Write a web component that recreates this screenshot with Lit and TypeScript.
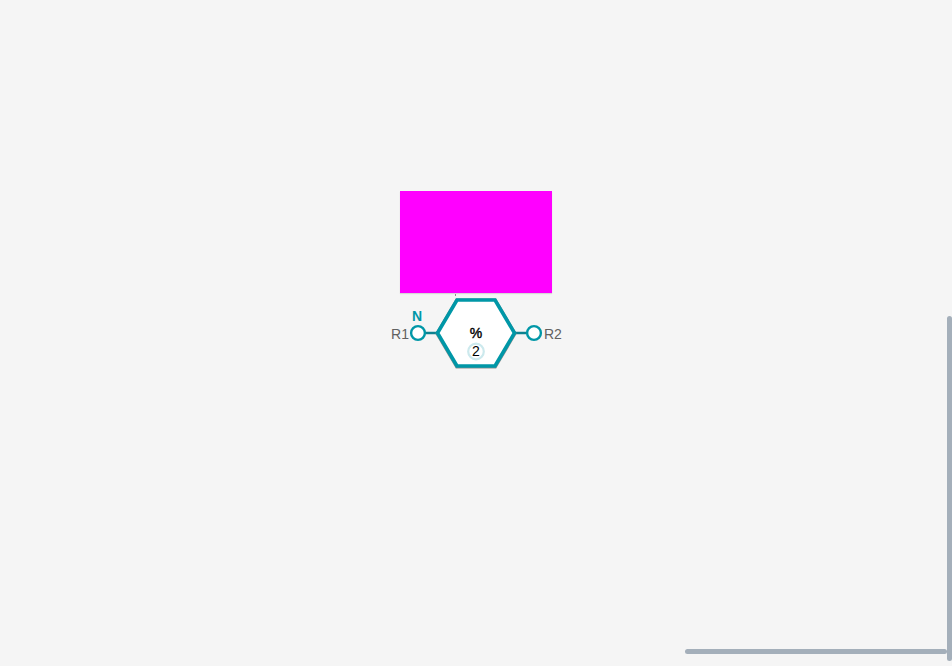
import { LitElement, html, css, svg } from "lit";
import { customElement } from "lit/decorators.js";

@customElement("operator-node")
export class OperatorNode extends LitElement {
  static styles = css`
    :host {
      display: block;
      position: relative;
      width: 180px;
      height: 80px;
    }
    .preview {
      position: absolute;
      left: 14px;
      bottom: 80px;
      width: 152px;
      height: 102px;
      background: #ff00ff;
      box-shadow: 0 1px 1px rgba(0, 0, 0, 0.12);
    }
    svg {
      display: block;
      width: 180px;
      height: 80px;
      overflow: visible;
    }
    .port,
    .badge,
    .body {
      fill: #ffffff;
    }
    .port,
    .body {
      stroke: #0097a7;
    }
    .shade {
      fill: none;
      stroke: #757575;
      opacity: 0.8;
    }
    .link {
      stroke: #0d8290;
    }
    .stem {
      stroke: #8f8f8f;
    }
    .badge {
      stroke: #cce9ed;
    }
    text {
      font-family: "Liberation Sans", Arial, sans-serif;
      font-size: 14px;
      fill: #616161;
    }
    .end {
      text-anchor: end;
    }
    .middle {
      text-anchor: middle;
      fill: #000000;
    }
    .kind {
      text-anchor: middle;
      font-weight: 700;
      fill: #0097a7;
    }
  `;

  render() {
    const hexagon = "51.5,40 71,7 109,7 128.5,40 109,73 71,73";
    return html`
      <div class="preview"></div>
      <svg viewBox="0 0 180 80" role="img" aria-label="Modulo 2, input R1, output R2">
        ${svg`
          <line class="stem" x1="69.5" y1="1" x2="69.5" y2="3" />
          <line class="link" stroke-width="2.5" x1="39" y1="40" x2="51" y2="40" />
          <line class="link" stroke-width="2.5" x1="129" y1="40" x2="141" y2="40" />
          <polygon class="shade" stroke-width="4" transform="translate(0 0.6)" points=${hexagon} />
          <polygon class="body" stroke-width="3.6" points=${hexagon} />
          <circle class="port" stroke-width="2.4" cx="32" cy="40" r="6.9" />
          <circle class="port" stroke-width="2.4" cx="148" cy="40" r="6.9" />
          <circle class="badge" stroke-width="2.2" cx="90" cy="58.5" r="7.8" />
          <text class="kind" x="31" y="28">N</text>
          <text class="end" x="23" y="46">R1</text>
          <text x="158" y="46">R2</text>
          <text class="middle" stroke="#000000" stroke-width="0.4" x="90" y="45">%</text>
          <text class="middle" x="90" y="63">2</text>
        `}
      </svg>
    `;
  }
}

@customElement("app-root")
export class AppRoot extends LitElement {
  static styles = css`
    :host {
      display: block;
    }
    .canvas {
      position: relative;
      display: grid;
      place-items: center;
      min-height: 100vh;
      overflow: hidden;
      background: #f5f5f5;
    }
    .bar {
      position: absolute;
      border-radius: 3px;
      background: #a4afba;
    }
    .vertical {
      right: 0;
      top: 47.5%;
      bottom: 5px;
      width: 5px;
    }
    .horizontal {
      left: 72%;
      right: 5px;
      bottom: 12px;
      height: 5px;
    }
  `;

  render() {
    return html`
      <main class="canvas">
        <operator-node></operator-node>
        <div class="bar vertical"></div>
        <div class="bar horizontal"></div>
      </main>
    `;
  }
}
